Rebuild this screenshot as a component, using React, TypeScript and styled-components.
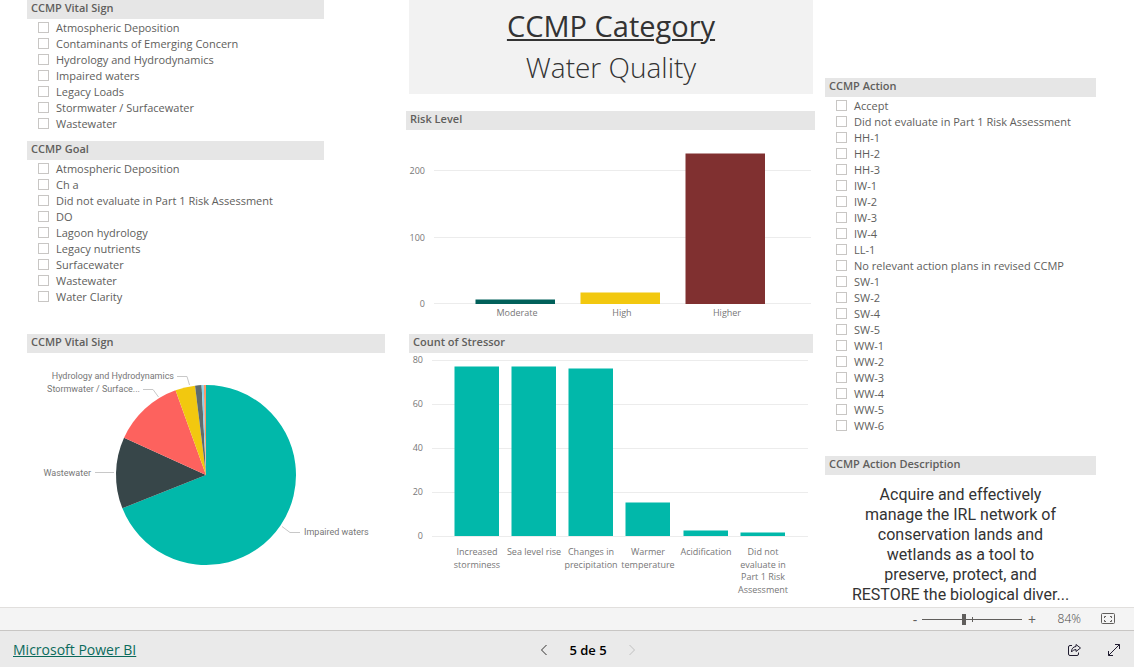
import React, { useState } from "react";
import styled, { createGlobalStyle } from "styled-components";

const UI_FONT = '"Open Sans", "Noto Sans", sans-serif';
const DIN_FONT = 'Roboto, "Open Sans", sans-serif';

const GlobalStyle = createGlobalStyle`
  *, *::before, *::after { box-sizing: border-box; }
  body { margin: 0; background: #fff; font-family: ${UI_FONT}; }
`;

const Page = styled.div`
  min-height: 100vh;
  display: flex;
  flex-direction: column;
`;

const Report = styled.main`
  flex: 1;
  display: grid;
  grid-template-columns: minmax(0, 358fr) minmax(0, 420fr) minmax(0, 271fr);
  column-gap: 10px;
  align-items: start;
  padding: 0 38px 0 27px;
`;

const Column = styled.div<{ $top?: number; $left?: number }>`
  padding-top: ${(p) => p.$top ?? 0}px;
  padding-left: ${(p) => p.$left ?? 0}px;
`;

const Visual = styled.section<{ $gap?: number; $inset?: number; $right?: number }>`
  margin-top: ${(p) => p.$gap ?? 0}px;
  padding: 0 ${(p) => p.$right ?? p.$inset ?? 0}px 0 ${(p) => p.$inset ?? 0}px;
`;

const VisualTitle = styled.h2`
  margin: 0;
  height: 19px;
  padding-left: 4px;
  background: #e6e6e6;
  color: #605e5c;
  font-size: 11px;
  font-weight: 600;
  line-height: 15px;
`;

const OptionList = styled.ul`
  list-style: none;
  margin: 1px 0 0;
  padding: 0 0 0 11px;
`;

const Option = styled.label`
  display: flex;
  align-items: flex-start;
  gap: 7px;
  height: 16px;
  color: #605e5c;
  font-size: 11px;
  line-height: 16px;
  white-space: nowrap;
`;

const Tick = styled.input`
  appearance: none;
  width: 11px;
  height: 11px;
  margin: 2px 0 0;
  border: 1px solid #c8c6c4;
  background: #fff;
  &:checked { background: #605e5c; }
`;

const Card = styled.header`
  margin: 0 2px 0 3px;
  height: 94px;
  padding-top: 5px;
  background: #f2f2f2;
  color: #333;
  text-align: center;
`;

const CardTitle = styled.h1`
  margin: 0;
  font-size: 29px;
  font-weight: 400;
  line-height: 42px;
  text-decoration: underline;
  text-decoration-thickness: 2px;
  text-underline-offset: 2px;
`;

const CardValue = styled.p`
  margin: 0;
  font-size: 28px;
  font-weight: 300;
  line-height: 40px;
`;

const Chart = styled.svg`
  display: block;
  width: 100%;
  height: auto;
`;

const AxisText = styled.text`
  fill: #777;
  font-family: ${UI_FONT};
  font-size: 9px;
`;

const PieText = styled.text`
  fill: #777;
  font-family: ${DIN_FONT};
  font-size: 9px;
`;

const Description = styled.p`
  margin: 10px 0 0;
  color: #333;
  font-family: ${DIN_FONT};
  font-size: 16px;
  line-height: 20px;
  text-align: center;
`;

const Line = styled.span`
  display: block;
`;

const ZoomBar = styled.div`
  display: flex;
  align-items: center;
  justify-content: flex-end;
  height: 23px;
  padding-right: 15px;
  border-top: 1px solid #e1dfdd;
  background: #f4f4f4;
  color: #605e5c;
`;

const PlainButton = styled.button`
  display: flex;
  align-items: center;
  justify-content: center;
  padding: 0;
  border: 0;
  background: none;
  color: inherit;
  font: inherit;
`;

const StepButton = styled(PlainButton)`
  width: 14px;
  height: 20px;
  font-size: 14px;
`;

const ZoomSlider = styled.input`
  appearance: none;
  width: 100px;
  height: 11px;
  margin: 0 3px 0 0;
  background:
    linear-gradient(#605e5c, #605e5c) center / 100% 1px no-repeat,
    linear-gradient(#605e5c, #605e5c) center / 1px 5px no-repeat;
  &::-webkit-slider-thumb {
    appearance: none;
    width: 4px;
    height: 11px;
    background: #605e5c;
  }
`;

const ZoomValue = styled.output`
  width: 42px;
  margin-right: 16px;
  color: #484644;
  font-size: 12px;
  font-weight: 300;
  line-height: 20px;
  text-align: right;
`;

const Footer = styled.footer`
  display: grid;
  grid-template-columns: 525fr auto 483fr;
  align-items: center;
  height: 37px;
  padding: 2px 13px 0;
  border-top: 1px solid #c8c6c4;
  background: #eaeaea;
`;

const BrandLink = styled.a`
  justify-self: start;
  color: #0b6a5c;
  font-size: 14px;
  line-height: 20px;
`;

const Pager = styled.nav`
  display: flex;
  align-items: center;
  justify-content: space-between;
  width: 100px;
  font-size: 13px;
  font-weight: 600;
  line-height: 20px;
`;

const PageButton = styled(PlainButton)`
  width: 12px;
  height: 20px;
  color: #323130;
  &:disabled { color: #c0c0c0; }
`;

const Actions = styled.div`
  display: flex;
  justify-content: flex-end;
  gap: 25px;
`;

const VITAL_SIGNS = [
  "Atmospheric Deposition",
  "Contaminants of Emerging Concern",
  "Hydrology and Hydrodynamics",
  "Impaired waters",
  "Legacy Loads",
  "Stormwater / Surfacewater",
  "Wastewater",
];

const GOALS = [
  "Atmospheric Deposition",
  "Ch a",
  "Did not evaluate in Part 1 Risk Assessment",
  "DO",
  "Lagoon hydrology",
  "Legacy nutrients",
  "Surfacewater",
  "Wastewater",
  "Water Clarity",
];

const ACTIONS = [
  "Accept",
  "Did not evaluate in Part 1 Risk Assessment",
  "HH-1", "HH-2", "HH-3",
  "IW-1", "IW-2", "IW-3", "IW-4",
  "LL-1",
  "No relevant action plans in revised CCMP",
  "SW-1", "SW-2", "SW-4", "SW-5",
  "WW-1", "WW-2", "WW-3", "WW-4", "WW-5", "WW-6",
];

const DESCRIPTION = [
  "Acquire and effectively",
  "manage the IRL network of",
  "conservation lands and",
  "wetlands as a tool to",
  "preserve, protect, and",
  "RESTORE the biological diver...",
];

function Slicer({ title, options, gap, right }: { title: string; options: string[]; gap?: number; right?: number }) {
  return (
    <Visual $gap={gap} $right={right}>
      <VisualTitle>{title}</VisualTitle>
      <OptionList>
        {options.map((name) => (
          <li key={name}>
            <Option>
              <Tick type="checkbox" />
              {name}
            </Option>
          </li>
        ))}
      </OptionList>
    </Visual>
  );
}

const SLICES = [
  { end: 248.3, color: "#01b8aa" },
  { end: 294.4, color: "#374649" },
  { end: 340.2, color: "#fd625e" },
  { end: 353, color: "#f2c80f" },
  { end: 357.2, color: "#5f6b6d" },
  { end: 358.6, color: "#8ad4eb" },
  { end: 360, color: "#fe9666" },
];

function pointAt(deg: number) {
  const a = (deg * Math.PI) / 180;
  return `${179 + 90 * Math.sin(a)} ${122 - 90 * Math.cos(a)}`;
}

function VitalSignPie() {
  return (
    <Chart viewBox="0 0 358 250" role="img" aria-label="CCMP Vital Sign">
      {SLICES.map((s, i) => {
        const start = i ? SLICES[i - 1].end : 0;
        const large = s.end - start > 180 ? 1 : 0;
        return (
          <path
            key={s.color}
            fill={s.color}
            d={`M179 122 L${pointAt(start)} A90 90 0 ${large} 1 ${pointAt(s.end)} Z`}
          />
        );
      })}
      <g fill="none" stroke="#c8c8c8">
        <path d="M150 23.5H160L162.500 32" />
        <path d="M116 36.500H126L131.500 44" />
        <path d="M68 119.500H87" />
        <path d="M255 173.500L263 179.500H273" />
      </g>
      <PieText x="147" y="26" textAnchor="end">Hydrology and Hydrodynamics</PieText>
      <PieText x="113" y="39" textAnchor="end">Stormwater / Surface...</PieText>
      <PieText x="64" y="123" textAnchor="end">Wastewater</PieText>
      <PieText x="277" y="182">Impaired waters</PieText>
    </Chart>
  );
}

const RISK_BARS = [
  { label: "Moderate", x: 69, top: 169, color: "#01605a" },
  { label: "High", x: 174, top: 162, color: "#f2c80f" },
  { label: "Higher", x: 279, top: 23, color: "#803030" },
];

function RiskChart() {
  return (
    <Chart viewBox="0 0 409 204" role="img" aria-label="Risk Level">
      {[{ v: 200, y: 40 }, { v: 100, y: 107 }, { v: 0, y: 173 }].map((t) => (
        <g key={t.v}>
          <rect x="28" y={t.y} width="377" height="1" fill="#ececec" />
          <AxisText x="19" y={t.y + 4} textAnchor="end">{t.v}</AxisText>
        </g>
      ))}
      {RISK_BARS.map((b) => (
        <g key={b.label}>
          <rect x={b.x + 0.5} y={b.top + 0.5} width="79.5" height={173.5 - b.top} fill={b.color} />
          <AxisText x={b.x + 42} y="186" textAnchor="middle">{b.label}</AxisText>
        </g>
      ))}
    </Chart>
  );
}

const STRESSOR_BARS = [
  { lines: ["Increased", "storminess"], x: 45, top: 13 },
  { lines: ["Sea level rise"], x: 102, top: 13 },
  { lines: ["Changes in", "precipitation"], x: 159, top: 15 },
  { lines: ["Warmer", "temperature"], x: 216, top: 149 },
  { lines: ["Acidification"], x: 274, top: 177 },
  { lines: ["Did not", "evaluate in", "Part 1 Risk", "Assessment"], x: 331, top: 179 },
];

function StressorChart() {
  return (
    <Chart viewBox="0 0 404 250" role="img" aria-label="Count of Stressor">
      {[80, 60, 40, 20, 0].map((v, i) => (
        <g key={v}>
          <rect x="23" y={7 + i * 44} width="376" height="1" fill="#ececec" />
          <AxisText x="14" y={10 + i * 44} textAnchor="end">{v}</AxisText>
        </g>
      ))}
      {STRESSOR_BARS.map((b) => (
        <g key={b.x}>
          <rect x={b.x + 0.5} y={b.top + 0.5} width="44.5" height={182.5 - b.top} fill="#01b8aa" />
          {b.lines.map((line, i) => (
            <AxisText key={line} x={b.x + 23} y={202 + i * 13 - (i > 1 ? 1 : 0)} textAnchor="middle">{line}</AxisText>
          ))}
        </g>
      ))}
    </Chart>
  );
}

export default function App() {
  const [zoom, setZoom] = useState(42);
  return (
    <Page>
      <GlobalStyle />
      <Report>
        <Column>
          <Slicer title="CCMP Vital Sign" options={VITAL_SIGNS} right={61} />
          <Slicer title="CCMP Goal" options={GOALS} gap={9} right={61} />
          <Visual $gap={29}>
            <VisualTitle>CCMP Vital Sign</VisualTitle>
            <VitalSignPie />
          </Visual>
        </Column>

        <Column $left={11}>
          <Card>
            <CardTitle>CCMP Category</CardTitle>
            <CardValue>Water Quality</CardValue>
          </Card>
          <Visual $gap={17}>
            <VisualTitle>Risk Level</VisualTitle>
            <RiskChart />
          </Visual>
          <Visual $inset={3} $right={2}>
            <VisualTitle>Count of Stressor</VisualTitle>
            <StressorChart />
          </Visual>
        </Column>

        <Column $top={78}>
          <Slicer title="CCMP Action" options={ACTIONS} />
          <Visual $gap={22}>
            <VisualTitle>CCMP Action Description</VisualTitle>
            <Description>
              {DESCRIPTION.map((line) => (
                <Line key={line}>{line} </Line>
              ))}
            </Description>
          </Visual>
        </Column>
      </Report>

      <ZoomBar>
        <StepButton type="button" aria-label="Zoom out" onClick={() => setZoom(zoom - 1)}>-</StepButton>
        <ZoomSlider
          type="range"
          aria-label="Zoom"
          min={0}
          max={100}
          value={zoom}
          onChange={(e) => setZoom(Number(e.target.value))}
        />
        <StepButton type="button" aria-label="Zoom in" onClick={() => setZoom(zoom + 1)}>+</StepButton>
        <ZoomValue>{zoom * 2}%</ZoomValue>
        <PlainButton type="button" aria-label="Fit to page">
          <svg width="22" height="14" viewBox="0 0 22 14" fill="none" stroke="#605e5c">
            <rect x="4.500" y="1.500" width="13" height="10" rx="1" />
            <path d="M9 4.500H7.500V6M13 4.500H14.500V6M9 9.500H7.500V8M13 9.500H14.500V8" />
          </svg>
        </PlainButton>
      </ZoomBar>

      <Footer>
        <BrandLink href="#">Microsoft Power BI</BrandLink>
        <Pager aria-label="Pages">
          <PageButton type="button" aria-label="Previous page">
            <svg width="8" height="12" viewBox="0 0 8 12" fill="none" stroke="currentColor">
              <path d="M6.500 1L1.500 6L6.500 11" />
            </svg>
          </PageButton>
          <span>5 de 5</span>
          <PageButton type="button" aria-label="Next page" disabled>
            <svg width="8" height="12" viewBox="0 0 8 12" fill="none" stroke="currentColor">
              <path d="M1.500 1L6.500 6L1.500 11" />
            </svg>
          </PageButton>
        </Pager>
        <Actions>
          <PlainButton type="button" aria-label="Share">
            <svg width="15" height="14" viewBox="0 0 15 14" fill="none" stroke="#201c30" strokeLinejoin="round">
              <path d="M5 2.500H3Q1.500 2.500 1.500 4V11Q1.500 12.500 3 12.500H10Q11.500 12.500 11.500 11V9.500" />
              <path d="M9 1.500L13.500 5L9 8.500V6.500Q6 6.500 4.500 9Q4.500 4 9 3.500Z" />
            </svg>
          </PlainButton>
          <PlainButton type="button" aria-label="Full screen">
            <svg width="14" height="14" viewBox="0 0 14 14" fill="none" stroke="#201c30">
              <path d="M1.500 12.500L12.500 1.500M8 1.500H12.500V6M1.500 8V12.500H6" />
            </svg>
          </PlainButton>
        </Actions>
      </Footer>
    </Page>
  );
}
